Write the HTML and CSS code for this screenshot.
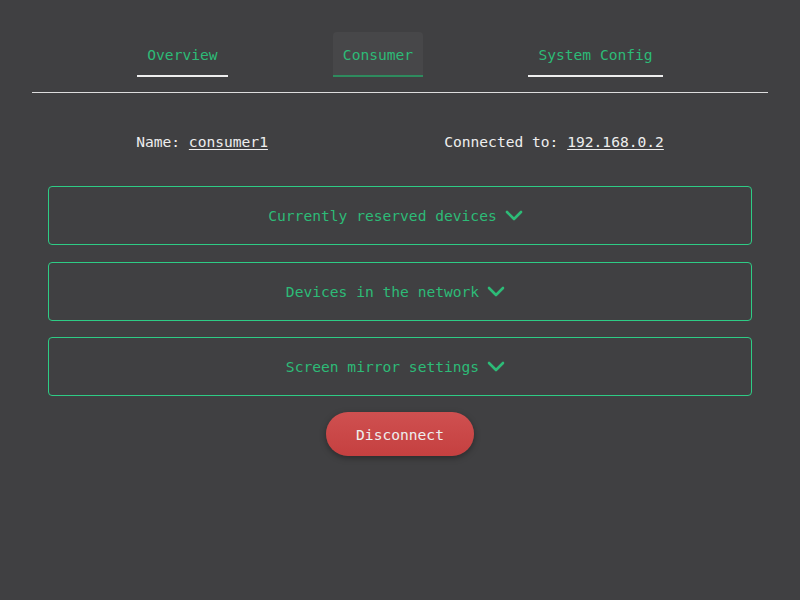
FILE: index.html
```html
<!DOCTYPE html>
<html>
<head>
<meta charset="utf-8">
<link rel="stylesheet" href="styles.css">
</head>
<body>
<div class="page">
  <nav class="tabs">
    <div class="tab">Overview</div>
    <div class="tab active">Consumer</div>
    <div class="tab">System Config</div>
  </nav>
  <hr class="rule">
  <div class="content">
    <div class="info">
      <span>Name: <u>consumer1</u></span>
      <span>Connected to: <u>192.168.0.2</u></span>
    </div>
    <div class="card"><span>Currently reserved devices</span><svg class="chev" viewBox="0 0 18 12" width="18" height="12"><path d="M2 2 L9 9 L16 2" fill="none" stroke="currentColor" stroke-width="2.6" stroke-linecap="round" stroke-linejoin="round"/></svg></div>
    <div class="card"><span>Devices in the network</span><svg class="chev" viewBox="0 0 18 12" width="18" height="12"><path d="M2 2 L9 9 L16 2" fill="none" stroke="currentColor" stroke-width="2.6" stroke-linecap="round" stroke-linejoin="round"/></svg></div>
    <div class="card"><span>Screen mirror settings</span><svg class="chev" viewBox="0 0 18 12" width="18" height="12"><path d="M2 2 L9 9 L16 2" fill="none" stroke="currentColor" stroke-width="2.6" stroke-linecap="round" stroke-linejoin="round"/></svg></div>
    <div class="actions"><button class="disconnect">Disconnect</button></div>
  </div>
</div>
</body>
</html>
```
FILE: styles.css
```css
html, body {
  margin: 0;
  padding: 0;
  background: #404042;
  height: 100%;
}
body {
  font-family: "DejaVu Sans Mono", "Liberation Mono", monospace;
  font-size: 14.6px;
  color: #eeeeee;
}
.page {
  padding: 32px 32px 0;
}
.tabs {
  display: flex;
  justify-content: space-evenly;
}
.tab {
  padding: 14px 10px 12px;
  line-height: 17px;
  color: #2dbb77;
  border-bottom: 2px solid #eeeeee;
}
.tab.active {
  background: #474749;
  border-radius: 4px 4px 0 0;
  border-bottom-color: #2e8b5e;
}
.rule {
  margin: 15px 0 0;
  border: 0;
  height: 1px;
  background: #dddddd;
}
.content {
  padding: 0 16px;
  display: flex;
  flex-direction: column;
}
.info {
  display: flex;
  justify-content: space-around;
  margin-top: 40px;
  line-height: 17px;
  margin-bottom: 36px;
}
.info u {
  text-underline-offset: 2px;
}
.card {
  height: 57px;
  border: 1px solid #2ecc85;
  border-radius: 4px;
  display: flex;
  align-items: center;
  justify-content: center;
  gap: 8px;
  color: #2dbb77;
  margin-bottom: 16.5px;
}
.chev {
  margin-top: 1px;
  margin-right: 9px;
}
.actions {
  display: flex;
  justify-content: center;
  margin-top: -0.5px;
}
.disconnect {
  font-family: inherit;
  font-size: 14.6px;
  color: #eeeeee;
  width: 148px;
  height: 44px;
  border: 0;
  border-radius: 22px;
  background: linear-gradient(#cf5050, #c54040);
  box-shadow: 0 2px 6px rgba(0,0,0,0.35);
}
```
